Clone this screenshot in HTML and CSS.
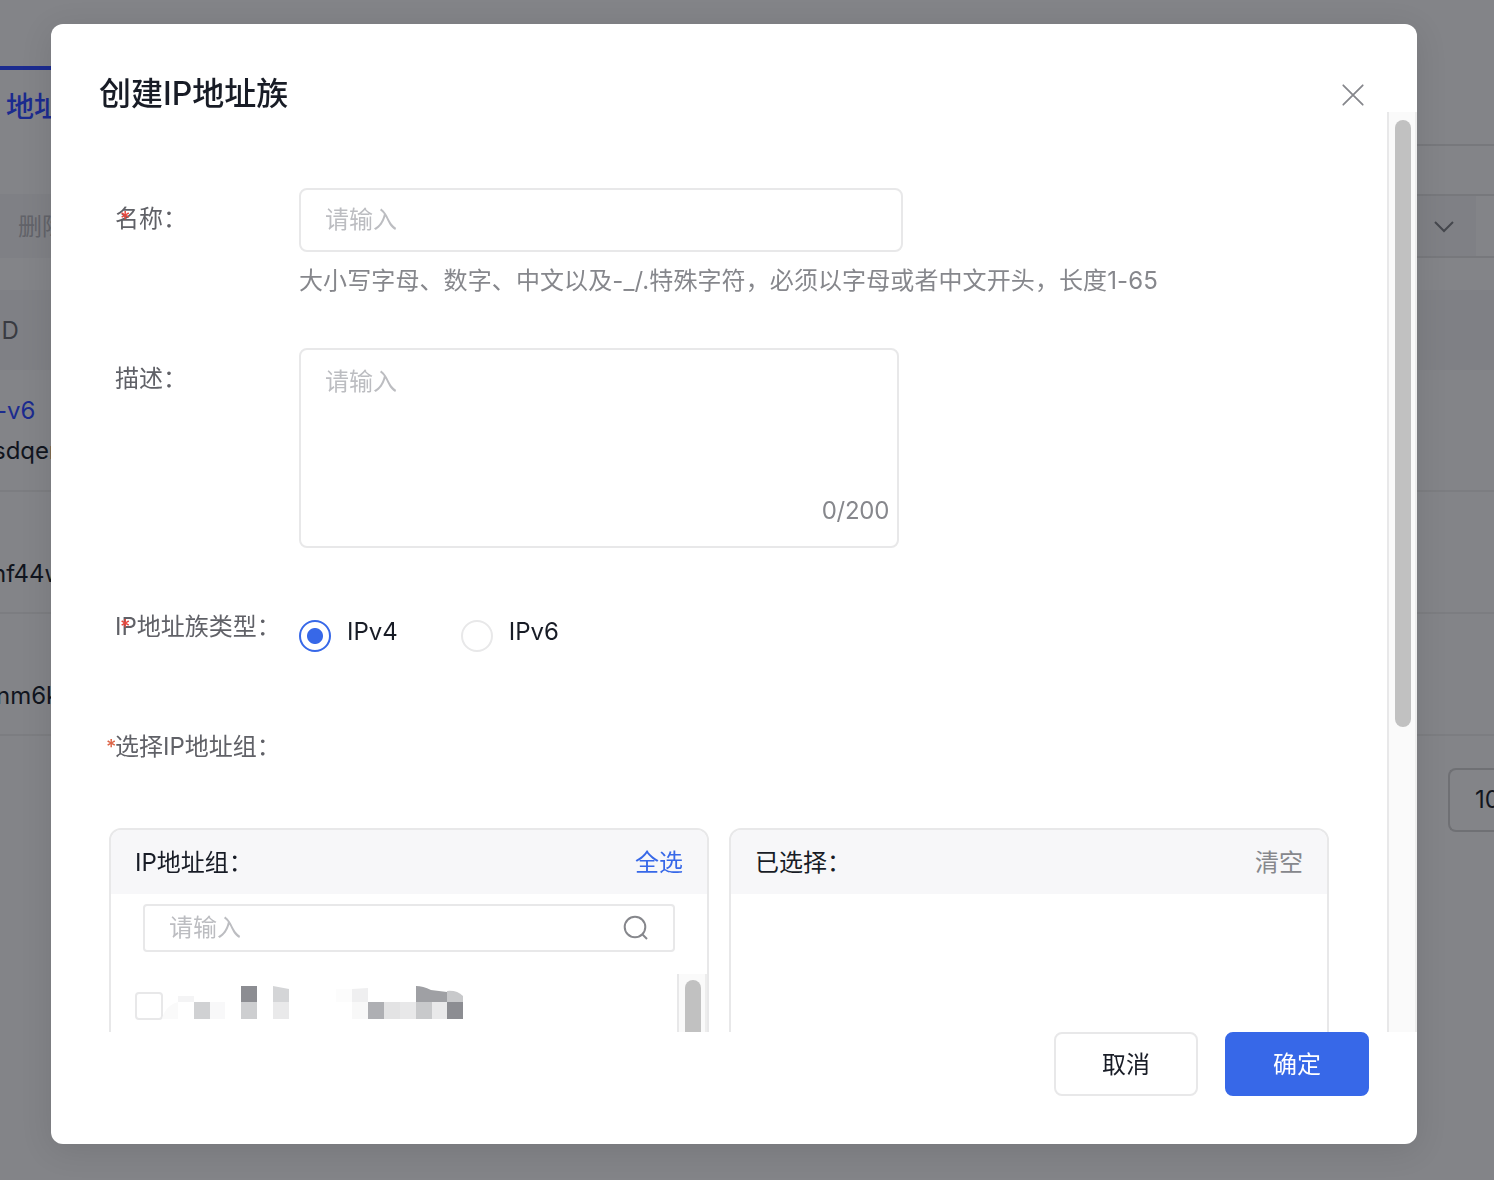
FILE: index.html
```
<!doctype html>
<html lang="zh-CN">
  <head>
    <meta charset="utf-8" />
    <title>创建IP地址族</title>
    <meta name="viewport" content="width=device-width, initial-scale=1.0" />
    <link rel="stylesheet" href="styles.css">
  </head>
  <body>
    <div class="page">
      <div class="tabs">
        <div class="tab active">地址族</div>
      </div>
      <div class="toolbar">
        <div class="btn-disabled">删除</div>
        <div class="filter">
          <div class="filter-select">
            <svg width="22" height="14" viewBox="0 0 22 14" fill="none" stroke="#45474d" stroke-width="2">
              <path d="M2 3l9 9 9-9" />
            </svg>
          </div>
        </div>
      </div>
      <div class="table">
        <div class="table-head">ID</div>
        <div class="table-row first">
          <a class="link">-v6</a>
          <span>sdqer</span>
        </div>
        <div class="table-row"><span class="id-b">nf44w</span></div>
        <div class="table-row"><span class="id-c">nm6k</span></div>
      </div>
      <div class="pagination">
        <div class="page-size">10</div>
      </div>
    </div>

    <div class="mask">
      <div class="modal">
        <div class="modal-header">
          <h1>创建IP地址族</h1>
          <svg class="close" width="22" height="22" viewBox="0 0 22 22" fill="none" stroke="#86878c" stroke-width="1.8" stroke-linecap="round">
            <path d="M1.3 1.3l19.4 19.4M20.7 1.3L1.3 20.7" />
          </svg>
        </div>
        <div class="modal-body">
          <div class="form">
            <div class="form-item name-item">
              <label class="required">名称：</label>
              <div>
                <div class="input">请输入</div>
                <p class="hint">大小写字母、数字、中文以及-_/.特殊字符，必须以字母或者中文开头，长度1-65</p>
              </div>
            </div>
            <div class="form-item desc-item">
              <label>描述：</label>
              <div class="textarea">
                <span>请输入</span>
                <span class="count">0/200</span>
              </div>
            </div>
            <div class="form-item type-item">
              <label class="required">IP地址族类型：</label>
              <div class="radio-group">
                <div class="radio checked"><i></i><span>IPv4</span></div>
                <div class="radio"><i></i><span>IPv6</span></div>
              </div>
            </div>
            <div class="form-item group-item">
              <label class="required outside">选择IP地址组：</label>
            </div>
            <div class="transfer">
              <div class="panel">
                <div class="panel-head">
                  <span>IP地址组：</span>
                  <a class="select-all">全选</a>
                </div>
                <div class="search">
                  <span>请输入</span>
                  <svg width="26" height="26" viewBox="0 0 26 26" fill="none" stroke="#86878c" stroke-width="2">
                    <circle cx="12" cy="12" r="10.3" />
                    <path d="M19 19l5 5" />
                  </svg>
                </div>
                <div class="list">
                  <div class="list-item">
                    <i class="checkbox"></i>
                    <svg class="mosaic" width="302" height="34" viewBox="0 0 302 34">
                      <path d="M0 33C2 24 8 18 16 16V33Z" fill="#fafafa" />
                      <path d="M16 10h16v6H16z" fill="#f4f4f5" />
                      <path d="M32 16h16v17H32z" fill="#d0d1d3" />
                      <path d="M48 16h15v17H48z" fill="#f8f8f9" />
                      <path d="M79 0h16v16H79z" fill="#8c8d92" />
                      <path d="M79 16h16v17H79z" fill="#cdced0" />
                      <path d="M111 0l16 3v13h-16z" fill="#d4d5d7" />
                      <path d="M111 16h16v17h-16z" fill="#e9e9ea" />
                      <path d="M174 3h16v13h-16z" fill="#fcfcfc" />
                      <path d="M190 3l16-1v14h-16z" fill="#efeff0" />
                      <path d="M190 16h16v17h-16z" fill="#f8f8f8" />
                      <path d="M206 16h16v17h-16z" fill="#aeafb3" />
                      <path d="M222 16h16v17h-16z" fill="#e3e3e4" />
                      <path d="M238 16h16v17h-16z" fill="#e8e8e9" />
                      <path d="M254 0q7 0 15 4l16 2v10h-31z" fill="#9fa0a4" />
                      <path d="M285 5q10-1 16 5v6h-16z" fill="#c8c9cb" />
                      <path d="M254 16h16v17h-16z" fill="#c8c9cb" />
                      <path d="M270 16h15v17h-15z" fill="#e9e9ea" />
                      <path d="M285 16h16v17h-16z" fill="#8c8d92" />
                    </svg>
                  </div>
                  <div class="scrollbar"><div class="thumb"></div></div>
                </div>
              </div>
              <div class="panel">
                <div class="panel-head">
                  <span>已选择：</span>
                  <a class="clear">清空</a>
                </div>
              </div>
            </div>
          </div>
          <div class="scrollbar"><div class="thumb"></div></div>
        </div>
        <div class="modal-footer">
          <button class="btn">取消</button>
          <button class="btn primary">确定</button>
        </div>
      </div>
    </div>
  </body>
</html>
```
FILE: styles.css
```
:root {
  --color-primary: #3768e8;
  --color-text: #181c26;
  --color-label: #606167;
  --color-muted: #86878c;
  --color-placeholder: #bcbdc1;
  --color-border: #e8e8e9;
  --page-bg: #838488;
  --page-fill: #7f8085;
  --page-line: #77787c;
  --page-link: #1b2b8f;
}
* {
  margin: 0;
  padding: 0;
  box-sizing: border-box;
}
html,
body {
  height: 100vh;
  overflow: hidden;
}
body {
  background: var(--page-bg);
  color: var(--color-text);
  font-family: Inter, "Noto Sans CJK SC", sans-serif;
  font-size: 24px;
  line-height: 40px;
}

/* list page behind the dialog */
.page {
  height: 100vh;
  padding-top: 66px;
  overflow: hidden;
  color: #11151e;
}
.tabs {
  display: flex;
  height: 80px;
  border-bottom: 2px solid var(--page-line);
}
.tab {
  width: 120px;
  height: 80px;
  padding-left: 6px;
  border-top: 4px solid var(--page-link);
  background: var(--page-bg);
  color: var(--page-link);
  font-size: 28px;
  font-weight: 500;
  line-height: 74px;
}
.toolbar {
  display: flex;
  justify-content: space-between;
  height: 64px;
  margin-top: 48px;
}
.btn-disabled {
  width: 120px;
  padding-left: 18px;
  background: var(--page-fill);
  color: #626369;
  line-height: 66px;
}
.filter {
  width: 194px;
  border-top: 2px solid var(--page-line);
  border-bottom: 2px solid var(--page-line);
}
.filter-select {
  display: flex;
  align-items: center;
  justify-content: flex-end;
  width: 176px;
  height: 60px;
  padding-right: 21px;
  background: var(--page-fill);
}
.table {
  margin-top: 32px;
}
.table-head {
  height: 80px;
  margin-left: -5px;
  background: var(--page-fill);
  color: #393b42;
  line-height: 82px;
}
.table-row {
  display: flex;
  flex-direction: column;
  height: 122px;
  padding-top: 62px;
  border-bottom: 2px solid #7c7d81;
}
.table-row.first {
  padding-top: 21px;
}
.table-row span {
  margin-left: -7px;
}
.table-row .id-b {
  margin-left: -8px;
}
.table-row .id-c {
  margin-left: -4px;
}
.link {
  margin-left: -4px;
  color: var(--page-link);
}
.pagination {
  display: flex;
  justify-content: flex-end;
  margin-top: 32px;
}
.page-size {
  width: 46px;
  height: 64px;
  padding-left: 25px;
  border: 2px solid #6f7074;
  border-right: 0;
  border-radius: 8px 0 0 8px;
  line-height: 60px;
  overflow: hidden;
}

/* dialog */
.mask {
  position: fixed;
  inset: 0;
  padding: 24px 77px 36px 51px;
}
.modal {
  display: flex;
  flex-direction: column;
  height: 1120px;
  border-radius: 12px;
  background: #fff;
  box-shadow: 0 6px 32px rgba(0, 0, 0, 0.1);
  overflow: hidden;
}
.modal-header {
  display: flex;
  justify-content: space-between;
  height: 88px;
  padding: 46px 53px 0 48px;
}
.modal-header h1 {
  font-size: 32px;
  font-weight: 500;
  line-height: 48px;
}
.close {
  margin-top: 14px;
}
.modal-body {
  display: flex;
  height: 920px;
  overflow: hidden;
}
.form {
  flex: 1;
  padding: 76px 58px 0;
}
.form-item {
  display: flex;
}
.form-item label {
  position: relative;
  width: 190px;
  padding-left: 6px;
  color: var(--color-label);
  line-height: 62px;
  white-space: nowrap;
}
.required::before {
  content: "*";
  position: absolute;
  left: 11px;
  top: 0;
  color: #e8463c;
  font-size: 20px;
  font-weight: 500;
}
.required.outside::before {
  left: -3px;
  color: #dc6447;
}
.name-item {
  height: 160px;
}
.desc-item {
  height: 248px;
}
.type-item {
  height: 120px;
}
.group-item {
  height: 112px;
}
.input {
  width: 604px;
  height: 64px;
  padding-left: 24px;
  border: 2px solid var(--color-border);
  border-radius: 8px;
  color: var(--color-placeholder);
  line-height: 60px;
}
.hint {
  margin-top: 9px;
  color: var(--color-muted);
  letter-spacing: 0.1px;
  white-space: nowrap;
}
.textarea {
  display: flex;
  flex-direction: column;
  justify-content: space-between;
  width: 600px;
  height: 200px;
  padding: 12px 8px 15px 24px;
  border: 2px solid var(--color-border);
  border-radius: 8px;
  color: var(--color-placeholder);
}
.count {
  align-self: flex-end;
  color: var(--color-muted);
  letter-spacing: -0.3px;
}
.radio-group {
  display: flex;
  gap: 63px;
  padding-top: 16px;
}
.radio {
  display: flex;
  gap: 16px;
}
.radio i {
  width: 32px;
  height: 32px;
  margin-top: 8px;
  border: 2px solid var(--color-border);
  border-radius: 50%;
}
.radio.checked i {
  border-color: var(--color-primary);
  background: radial-gradient(circle, var(--color-primary) 7.5px, #fff 8.5px);
}
.transfer {
  display: flex;
  gap: 20px;
}
.panel {
  width: 600px;
  height: 400px;
  border: 2px solid var(--color-border);
  border-radius: 12px;
  overflow: hidden;
}
.panel-head {
  display: flex;
  justify-content: space-between;
  height: 64px;
  padding: 0 24px;
  background: #f7f7f9;
  line-height: 66px;
}
.select-all {
  color: var(--color-primary);
}
.clear {
  color: var(--color-muted);
}
.search {
  display: flex;
  align-items: center;
  justify-content: space-between;
  width: 532px;
  height: 48px;
  margin: 10px 0 0 32px;
  padding: 0 24px;
  border: 2px solid var(--color-border);
  border-radius: 4px;
  color: var(--color-placeholder);
}
.list {
  display: flex;
  justify-content: space-between;
  height: 300px;
  margin-top: 22px;
}
.list-item {
  display: flex;
  padding: 12px 0 0 24px;
}
.checkbox {
  width: 28px;
  height: 28px;
  margin-top: 6px;
  border: 2px solid var(--color-border);
  border-radius: 4px;
}
.mosaic {
  margin-left: -1px;
}
.scrollbar {
  width: 30px;
  padding: 8px 4px 0 6px;
  border-left: 2px solid var(--color-border);
  border-right: 2px solid #ededed;
  background: #fafafa;
}
.thumb {
  width: 16px;
  height: 607px;
  border-radius: 8px;
  background: #c1c1c1;
}
.list .scrollbar {
  padding-top: 6px;
}
.list .thumb {
  height: 160px;
}
.modal-footer {
  display: flex;
  justify-content: flex-end;
  gap: 27px;
  padding-right: 48px;
}
.btn {
  width: 144px;
  height: 64px;
  padding-top: 2px;
  border: 2px solid var(--color-border);
  border-radius: 8px;
  background: #fff;
  color: var(--color-text);
  font: inherit;
}
.btn.primary {
  border-color: var(--color-primary);
  background: var(--color-primary);
  color: #fff;
}
```
